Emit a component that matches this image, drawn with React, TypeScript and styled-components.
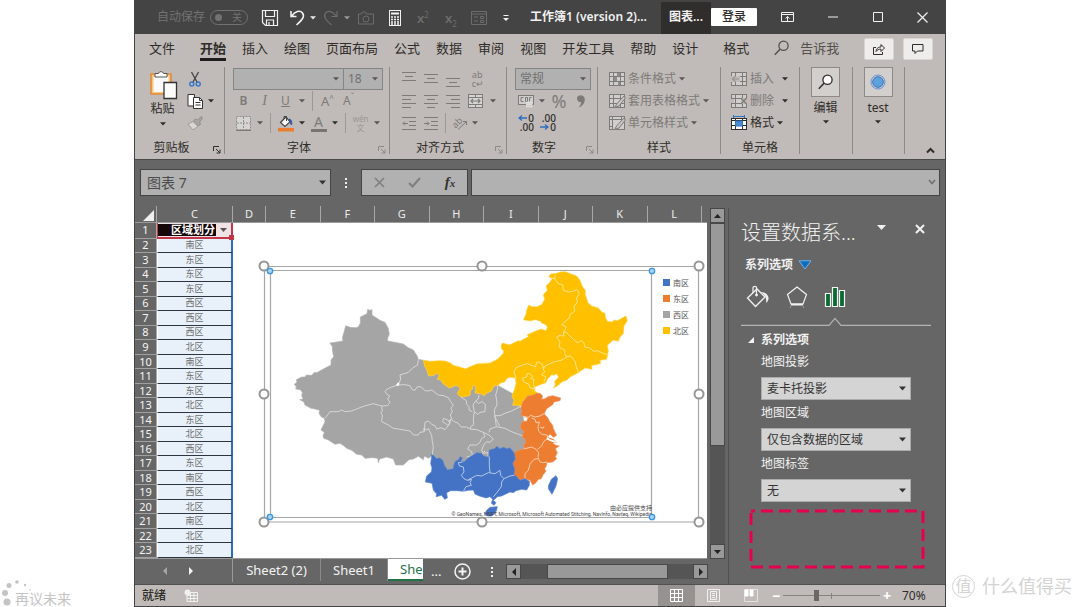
import React from "react";
import styled, { createGlobalStyle, css } from "styled-components";

const ink = "#2f2c2a";
const dim = "#7d7a78";
const ribbonBg = "#c0bbb8";
const paneBg = "#666666";

const GlobalStyle = createGlobalStyle`
  * { box-sizing: border-box; }
  body {
    margin: 0;
    background: #ffffff;
    color: ${ink};
    font: 12px/16px "Noto Sans", "Noto Sans CJK SC", sans-serif;
  }
  button, input, select { font: inherit; color: inherit; margin: 0; }
  button { padding: 0; border: 0; background: none; }
  svg { display: block; flex: none; }
  a { color: inherit; text-decoration: none; }
`;

/* ---------- page frame ---------- */

const Page = styled.div`
  display: grid;
  grid-template-columns: 134px minmax(0, 1fr) 134px;
  min-height: 100vh;
`;

const Margin = styled.aside<{ $pad?: number }>`
  display: flex;
  align-items: flex-end;
  padding-left: ${(p) => p.$pad ?? 0}px;
`;

const LeftMark = styled.div`
  display: flex;
  align-items: flex-end;
  color: #c4c4c4;
  font-size: 14px;
  line-height: 16px;
  white-space: nowrap;
`;

const RightMark = styled.div`
  display: flex;
  align-items: center;
  gap: 7px;
  padding-bottom: 9px;
  color: #d4d4d4;
  font-size: 18px;
  line-height: 24px;
  white-space: nowrap;
`;

const MarkDisc = styled.span`
  width: 23px;
  height: 23px;
  border-radius: 50%;
  border: 1px solid #d4d4d4;
  font-size: 16px;
  line-height: 21px;
  text-align: center;
`;

const Window = styled.main`
  display: flex;
  flex-direction: column;
  border-left: 1px solid #444444;
  border-right: 1px solid #444444;
  border-bottom: 1px solid #444444;
  background: ${paneBg};
`;

/* ---------- title bar ---------- */

const TitleBar = styled.header`
  display: flex;
  align-items: center;
  height: 34px;
  background: #444444;
  color: #f2f2f2;
`;

const AutoSave = styled.label`
  display: flex;
  align-items: center;
  gap: 5px;
  margin: 0 7px 0 22px;
  color: #727272;
  white-space: nowrap;
`;

const SwitchBox = styled.span`
  position: relative;
  display: flex;
  align-items: center;
  justify-content: flex-end;
  width: 38px;
  height: 15px;
  padding-right: 5px;
  border: 1px solid #727272;
  border-radius: 8px;
  font-size: 10px;
  line-height: 12px;
`;

const SwitchInput = styled.input`
  position: absolute;
  left: 4px;
  top: 3px;
  width: 7px;
  height: 7px;
  appearance: none;
  border-radius: 50%;
  background: #727272;
`;

const ToolButton = styled.button<{ $w: number; $off?: boolean }>`
  display: flex;
  flex: none;
  align-items: center;
  justify-content: center;
  width: ${(p) => p.$w}px;
  height: 22px;
  color: ${(p) => (p.$off ? dim : "inherit")};
`;

const QuickButton = styled(ToolButton)`
  height: 34px;
  padding-top: 2px;
  color: ${(p) => (p.$off ? "#6c6c6c" : "#f2f2f2")};
`;

const FileName = styled.h1`
  flex: 1;
  margin: 0 0 0 11px;
  font-size: 12px;
  line-height: 32px;
  font-weight: 600;
  white-space: nowrap;
`;

const ContextTab = styled.span`
  align-self: stretch;
  width: 50px;
  margin-top: 2px;
  background: #302e2c;
  font-weight: 600;
  line-height: 29px;
  text-align: center;
`;

const LoginButton = styled.button`
  width: 46px;
  height: 18px;
  margin: 0 8px 0 0;
  border-radius: 1px;
  background: #ffffff;
  color: ${ink};
  font-weight: 500;
  line-height: 18px;
`;

/* ---------- ribbon ---------- */

const TabRow = styled.nav`
  display: flex;
  align-items: flex-start;
  gap: 16px;
  height: 30px;
  padding-left: 14px;
  background: ${ribbonBg};
  font-size: 13px;
  white-space: nowrap;
`;

const Tab = styled.a<{ $active?: boolean; $apart?: boolean }>`
  margin-right: ${(p) => (p.$apart ? 9 : 0)}px;
  padding: 5px 0 1px;
  line-height: 18px;
  font-weight: ${(p) => (p.$active ? 700 : 400)};
  border-bottom: 3px solid ${(p) => (p.$active ? "#1f1d1c" : "transparent")};
`;

const TellMe = styled(Tab)`
  display: flex;
  align-items: center;
  gap: 11px;
  color: #55514e;
`;

const TabActions = styled.div`
  display: flex;
  gap: 9px;
  margin: 4px 12px 0 auto;
`;

const ActionButton = styled.button`
  display: grid;
  place-items: center;
  width: 30px;
  height: 22px;
  border: 1px solid #d8d5d3;
  border-radius: 2px;
  background: #efedec;
`;

const RibbonBody = styled.div`
  display: flex;
  height: 96px;
  padding: 3px 0 5px;
  border-bottom: 1px solid #4a4a4a;
  background: ${ribbonBg};
`;

const Group = styled.section<{ $w: number }>`
  position: relative;
  display: flex;
  flex: none;
  flex-direction: column;
  width: ${(p) => p.$w}px;
  border-right: 1px solid #8d8986;
`;

const GroupRow = styled.div<{ $pad?: number }>`
  display: flex;
  align-items: center;
  height: 22px;
  padding-left: ${(p) => p.$pad ?? 8}px;
  white-space: nowrap;

  &:first-child { height: 23px; }
`;

const GroupLabel = styled.h2<{ $full?: boolean }>`
  margin: auto ${(p) => (p.$full ? 0 : 16)}px 0 0;
  font-size: 12px;
  line-height: 12px;
  font-weight: 400;
  text-align: center;
`;

const Launcher = styled.button<{ $off?: boolean }>`
  position: absolute;
  right: 3px;
  bottom: 0;
  color: ${(p) => (p.$off ? "#8d8986" : ink)};
`;

const Split = styled.span<{ $gap?: number }>`
  width: 1px;
  height: 20px;
  margin: 0 ${(p) => p.$gap ?? 4}px;
  background: #9c9895;
`;

const ClipRow = styled.div`
  display: flex;
  flex: none;
  height: 68px;
`;

const BigButton = styled.button<{ $w: number; $gap?: number }>`
  display: flex;
  flex-direction: column;
  align-items: center;
  justify-content: flex-start;
  gap: ${(p) => p.$gap ?? 0}px;
  width: ${(p) => p.$w}px;
  padding-right: 2px;
  line-height: 16px;
`;

const CaretLine = styled.span`
  padding-top: 4px;
`;

const ClipSide = styled.div`
  display: flex;
  flex-direction: column;
  flex: 1;
  padding-top: 1px;
`;

const ClipTools = styled.div`
  display: flex;
`;

const BoxedIcon = styled.span`
  display: grid;
  place-items: center;
  width: 29px;
  height: 30px;
  margin-bottom: 3px;
  border: 1px solid #8d8986;
  background: #d2cfcd;
`;

const ListButton = styled.button<{ $off?: boolean }>`
  display: flex;
  align-items: center;
  gap: 3px;
  height: 22px;
  color: ${(p) => (p.$off ? dim : ink)};
`;

const Collapse = styled.button`
  align-self: flex-end;
  margin: 0 10px 0 auto;
`;

const WrapText = styled.span`
  font-size: 9px;
  line-height: 9px;
  text-align: left;
`;

const Combo = styled.span<{ $w: number; $h: number; $tone: "ribbon" | "pane" | "name"; $flush?: boolean }>`
  position: relative;
  display: block;
  flex: none;
  width: ${(p) => p.$w}px;
  height: ${(p) => p.$h}px;
  margin-left: ${(p) => (p.$flush ? -1 : 0)}px;
  color: ${(p) => (p.$tone === "ribbon" ? "#707070" : "#333333")};

  select {
    width: 100%;
    height: 100%;
    padding: 0 16px 0 4px;
    appearance: none;
    border: 1px solid #858585;
    border-radius: 0;
    background: #b1b1b1;
    outline: none;
    ${(p) => p.$tone === "pane" && css`background: #d4d4d4; border-color: #ababab; padding-left: 5px;`}
    ${(p) => p.$tone === "name" && css`border-color: #444444; padding-left: 6px; font-size: 14px; color: #4c4c4c;`}
  }
  svg { position: absolute; right: 5px; top: 0; height: 100%; pointer-events: none; }
`;

/* ---------- formula bar ---------- */

const FormulaBar = styled.div`
  display: flex;
  align-items: center;
  height: 46px;
  padding: 0 5px 1px;
  color: #e8e8e8;
`;

const FormulaButtons = styled.div`
  display: flex;
  align-items: center;
  justify-content: space-around;
  width: 107px;
  height: 27px;
  border: 1px solid #444444;
  background: #b1b1b1;
  color: #808080;
`;

const FormulaField = styled.label`
  position: relative;
  flex: 1;
  height: 27px;
  margin-left: 3px;
  color: #707070;

  input {
    width: 100%;
    height: 100%;
    border: 1px solid #444444;
    border-radius: 0;
    background: #b1b1b1;
  }
  svg { position: absolute; right: 4px; top: 10px; }
`;

const FxButton = styled.button`
  color: #333333;
  font: italic 700 15px/20px "Liberation Serif", serif;
  small { font-size: 11px; }
`;

const Dots = styled.span<{ $m: number }>`
  width: 2px;
  height: 10px;
  margin: 0 ${(p) => p.$m}px;
  background: repeating-linear-gradient(#f0f0f0 0 2px, transparent 2px 4px);
`;

/* ---------- worksheet ---------- */

const Workspace = styled.div`
  display: flex;
  flex: 1;
  border-bottom: 1px solid #505050;
`;

const SheetColumn = styled.div`
  display: flex;
  flex: 1;
  flex-direction: column;
  min-width: 0;
`;

const SheetBody = styled.div`
  display: flex;
  gap: 3px;
  padding-right: 3px;
`;

const Canvas = styled.div`
  position: relative;
  flex: 1;
  min-width: 0;
`;

const Grid = styled.table`
  width: 100%;
  height: 353px;
  table-layout: fixed;
  border-collapse: separate;
  border-spacing: 0;
  border-bottom: 1px solid #9a9a9a;
  font-size: 11px;
  line-height: 12px;

  th { padding: 0; font-weight: 400; }
  td { padding: 0; }
  thead th {
    height: 17px;
    border-right: 1px solid #a8a8a8;
    border-bottom: 1px solid #9a9a9a;
    color: #ececec;
  }
  thead th:last-child { border-right: 0; }
  tbody th {
    border-right: 1px solid #a8a8a8;
    border-bottom: 1px solid #a0a0a0;
    color: #f4f4f4;
  }
`;

const Corner = styled.svg`
  margin: 2px 0 0 8px;
`;

const Region = styled.td`
  border-left: 1px solid #ffffff;
  border-right: 2px solid #2f6bc4;
  border-bottom: 1px solid #2c3440;
  background: #e8f0fa;
  color: #6c6c6c;
  font-size: 9px;
  text-align: center;
`;

const HeadCell = styled.td`
  position: relative;
  border: 1px solid #c4364a;
  border-width: 0 2px 2px 1px;
  background: #f1e2e5;

  &::after {
    content: "";
    position: absolute;
    right: -3px;
    bottom: -3px;
    width: 5px;
    height: 5px;
    background: #c4364a;
  }
`;

const HeadInner = styled.div`
  display: flex;
  align-items: center;
  justify-content: space-between;
  color: #555555;

  span {
    flex: 1;
    margin-right: 4px;
    padding-right: 1px;
    background: #150607;
    color: #ffffff;
    font-size: 11px;
    line-height: 12px;
    font-weight: 600;
    text-align: right;
  }
  svg { margin-right: 4px; }
`;

const Blank = styled.td`
  background: #ffffff;
`;

const ChartFrame = styled.figure`
  position: absolute;
  left: 123px;
  top: 54px;
  margin: 0;
`;

const ScrollTrack = styled.div`
  display: flex;
  flex-direction: column;
  width: 15px;
  margin-top: 2px;
  background: #555555;
`;

const ScrollButton = styled.button`
  display: grid;
  place-items: center;
  flex: none;
  width: 15px;
  height: 15px;
  border: 1px solid #484848;
  background: #999999;
  color: #222222;
`;

const ScrollThumb = styled.div`
  height: 223px;
  margin-bottom: auto;
  border: 1px solid #484848;
  background: #999999;
`;

const SheetBar = styled.div`
  display: flex;
  align-items: flex-start;
  flex: 1;
  min-height: 24px;
  color: #f4f4f4;
  font-size: 13px;
  line-height: 21px;
  white-space: nowrap;
`;

const SheetNav = styled.div`
  display: flex;
  align-items: center;
  justify-content: center;
  gap: 22px;
  width: 98px;
  height: 23px;
  padding-right: 12px;
  border-right: 1px solid #999999;
`;

const NavButton = styled.button<{ $off?: boolean }>`
  color: ${(p) => (p.$off ? "#a6a6a6" : "#f4f4f4")};
`;

const SheetTab = styled.button<{ $w: number; $active?: boolean }>`
  width: ${(p) => p.$w}px;
  height: 22px;
  border-right: 1px solid #8a8a8a;
  ${(p) =>
    p.$active &&
    css`
      padding-left: 12px;
      border-right: 0;
      border-bottom: 2px solid #217346;
      background: #ffffff;
      color: #217346;
      text-align: left;
    `}
`;

const SheetTools = styled.div`
  display: flex;
  align-items: center;
  height: 25px;
  margin-left: 8px;
`;

const NewSheet = styled.button`
  margin: 0 20px 0 13px;
`;

const HScroll = styled.div`
  display: flex;
  width: 202px;
  margin: 5px 20px 0 auto;
  background: #555555;
`;

const HThumb = styled.div`
  width: 121px;
  margin: 0 auto 0 26px;
  border: 1px solid #484848;
  background: #999999;
`;

/* ---------- format pane ---------- */

const Pane = styled.aside`
  width: 217px;
  margin-top: 2px;
  padding: 11px 13px 0 12px;
  border-left: 1px solid #505050;
  color: #f2f2f2;
`;

const PaneHead = styled.div`
  display: flex;
  align-items: flex-start;
  height: 38px;
  margin-right: -13px;
`;

const PaneTitle = styled.h2`
  flex: 1;
  margin: 0;
  font-size: 20px;
  line-height: 28px;
  font-weight: 300;
  white-space: nowrap;
`;

const PaneButton = styled.button<{ $w: number }>`
  display: flex;
  justify-content: center;
  width: ${(p) => p.$w}px;
  padding-top: 5px;
`;

const Chooser = styled.button`
  display: flex;
  align-items: center;
  gap: 5px;
  margin-left: 4px;
  font-weight: 700;
  line-height: 16px;
`;

const PaneTabs = styled.div`
  display: flex;
  gap: 16px;
  margin: 12px 0 8px 5px;
`;

const Section = styled.section`
  display: flex;
  flex-direction: column;
  padding: 6px 0 0 20px;
`;

const SectionTitle = styled.h3`
  display: flex;
  align-items: center;
  gap: 6px;
  margin: 0 0 6px -14px;
  font-size: 12px;
  line-height: 16px;
  font-weight: 700;
`;

const Field = styled.label`
  display: flex;
  flex-direction: column;
  gap: 7px;
  margin-bottom: 5px;
  line-height: 16px;
`;

const Marker = styled.svg`
  margin: 2px 0 0 8px;
`;

/* ---------- status bar ---------- */

const StatusBar = styled.footer`
  display: flex;
  align-items: center;
  height: 21px;
  padding-left: 7px;
  background: ${ribbonBg};
  color: ${ink};
`;

const Ready = styled.span`
  margin-right: 18px;
  font-weight: 500;
`;

const ViewButtons = styled.div`
  display: flex;
  align-self: stretch;
  margin-left: auto;
`;

const ViewButton = styled.button<{ $on?: boolean }>`
  display: grid;
  place-items: center;
  width: 37px;
  background: ${(p) => (p.$on ? "#969290" : "transparent")};
`;

const ZoomButton = styled.button`
  width: 14px;
  color: #ffffff;
  font-size: 14px;
  font-weight: 700;
  line-height: 18px;
`;

const ZoomRange = styled.input`
  width: 97px;
  height: 12px;
  appearance: none;
  background:
    linear-gradient(#858280, #858280) 50% 50% / 1px 6px no-repeat,
    linear-gradient(#858280, #858280) 0 50% / 100% 1px no-repeat;

  &::-webkit-slider-thumb {
    appearance: none;
    width: 5px;
    height: 11px;
    background: #6a6765;
  }
`;

const ZoomValue = styled.span`
  width: 43px;
  margin-left: 8px;
`;

/* ---------- icons ---------- */

type Kids = { children: React.ReactNode; w?: number; h?: number };

const Icon = ({ children, w = 16, h = 16 }: Kids) => (
  <svg
    width={w}
    height={h}
    viewBox={`0 0 ${w} ${h}`}
    fill="none"
    stroke="currentColor"
    strokeWidth="1"
    overflow="visible"
    aria-hidden="true"
  >
    {children}
  </svg>
);

const Caret = ({ color = "#5a5654" }: { color?: string }) => (
  <svg width="6" height="4" viewBox="0 0 6 4" aria-hidden="true">
    <path d="M0 .3h6L3 3.6z" fill={color} />
  </svg>
);

const Arrow = ({ d, w = 7, h = 8 }: { d: string; w?: number; h?: number }) => (
  <svg width={w} height={h} viewBox={`0 0 ${w} ${h}`} aria-hidden="true">
    <path d={d} fill="currentColor" />
  </svg>
);

const ChevDown = () => (
  <Icon w={8} h={6}>
    <path d="M1 1l3 3.5L7 1" strokeWidth="1.6" />
  </Icon>
);

const Lines = ({ rows }: { rows: number[][] }) => (
  <Icon w={14} h={16}>
    {rows.map(([x1, x2, y]) => (
      <path key={y} d={`M${x1} ${y}.5H${x2}`} />
    ))}
  </Icon>
);

const CellsIcon = ({ kind }: { kind: "cond" | "table" | "style" | "insert" | "delete" | "format" }) => {
  const on = kind === "format";
  return (
    <Icon w={16} h={16}>
      <rect x=".5" y="1.5" width="15" height="13" fill={on ? "#fff" : "#d0cecc"} />
      {kind === "style" ? (
        <path d="M.5 4.5h15M3.5 1.5v13M12.500 1.500v3M.5 11.500h3" />
      ) : (
        <path d="M.5 5.5h15M.5 10.5h15M4.5 1.5v13M11.5 1.5v13" />
      )}
      {kind === "cond" && <path d="M5 6h3v4H5zM8 2h3v3H8zM9 11h2v3H9z" fill="#8f8c8a" stroke="none" />}
      {(kind === "table" || kind === "style") && (
        <path d="M15.500 2.500L8 10.500 5.500 14.500l4.500-1.500 6-7.500z" fill="#c8c5c3" />
      )}
      {kind === "insert" && (
        <>
          <path d="M0 5h9v6H0z" fill={ribbonBg} stroke="none" />
          <path d="M8 8H1.500M4.500 5L1.500 8l3 3" stroke="#98948f" strokeWidth="1.200" />
        </>
      )}
      {kind === "delete" && (
        <>
          <path d="M0 6h3v4H0zM10 5h6v6h-6z" fill={ribbonBg} stroke="none" />
          <path d="M10 5l5.500 6M15.500 5L10 11" strokeWidth="1.300" />
        </>
      )}
      {on && (
        <>
          <path d="M0 0h16v3H0z" fill={ribbonBg} stroke="none" />
          <path d="M2.5 0v3M13.5 0v3M3 1.5h10" stroke="#2f73c4" />
          <path d="M0 3.500h16" />
          <rect x="4.500" y="6" width="7" height="5" fill="#4a8ed0" stroke="#2f73c4" />
        </>
      )}
    </Icon>
  );
};

const Magnifier = ({ fill = "none" }: { fill?: string }) => (
  <Icon w={15} h={16}>
    <circle cx="9.5" cy="5.8" r="4.6" fill={fill} strokeWidth="1.3" />
    <path d="M6 9.3L.8 14.8" strokeWidth="1.5" />
  </Icon>
);

const PasteIcon = () => (
  <Icon w={28} h={33}>
    <path d="M2 7h20v20H2z" fill="#f4c87e" stroke="#e08a3a" strokeWidth="1.600" />
    <path d="M4.500 9.500h15V25h-15z" fill="#fafafa" stroke="none" />
    <path d="M6 10V6.500h3.500a2.600 2.600 0 015 0H18V10z" fill="#fff" stroke="#555" />
    <path d="M15 15.500h12.500v16H15z" fill="#fbfbfb" stroke="#333" strokeWidth="1.300" />
  </Icon>
);

const CutIcon = () => (
  <Icon w={12} h={16}>
    <path d="M2.500 1l6 11M9.500 1l-6 11" stroke="#444" strokeWidth="1.3" />
    <circle cx="2.800" cy="13" r="2" stroke="#3a78c8" strokeWidth="1.500" />
    <circle cx="9.200" cy="13" r="2" stroke="#3a78c8" strokeWidth="1.500" />
  </Icon>
);

const CopyIcon = () => (
  <Icon w={17} h={16}>
    <path d="M1 1.500h6.500V13H1z" fill="#fff" stroke="#333" />
    <path d="M6.500 4.500h6l3 3v8h-9z" fill="#fff" stroke="#333" />
    <path d="M12.500 4.500v3h3M8.500 9.500h5M8.500 12h5" stroke="#333" />
  </Icon>
);

const BrushIcon = () => (
  <Icon w={16} h={16}>
    <path d="M14.500 1.500l-4 3.500-2-1-2 2 5 5 2-2-1-2 3-4z" fill="#aaa6a3" stroke="#8f8c8a" />
    <path d="M6 6.500L1 9l5 6 5-3.500z" fill="#d8d5d3" stroke="#a09c99" />
  </Icon>
);

const BordersIcon = () => (
  <Icon w={15} h={15}>
    <rect x=".5" y=".5" width="14" height="13" fill="#d6d4d3" stroke="#8f8c8a" strokeDasharray="2 1" />
    <path d="M7.500 1v13M1 7h13" stroke="#8f8c8a" strokeDasharray="2 1" />
    <path d="M0 14.500h15" />
  </Icon>
);

const FillIcon = () => (
  <Icon w={16} h={17}>
    <path d="M2.500 7.500L8 2l4 5-5 4.500z" fill="#fff" stroke="#444" strokeWidth="1.200" />
    <path d="M6 4V1.500h2.500V6" stroke="#444" />
    <path d="M11 4c3 .5 3 4 2.500 6-1-1-1-4-2.500-6z" fill="#2f55a4" stroke="#2f55a4" />
    <path d="M0 13h16v3.500H0z" fill="#ed7d31" stroke="none" />
  </Icon>
);

const MergeIcon = () => (
  <Icon w={16} h={16}>
    <rect x=".5" y="1.500" width="14" height="13" fill="#d6d4d3" />
    <path d="M.5 4.500h14M.5 11.500h14M7.500 1.500v3M7.500 11.500v3" />
    <path d="M3 8h9M5 6L3 8l2 2M10 6l2 2-2 2" strokeWidth="1.200" />
  </Icon>
);

const IndentIcon = ({ dir }: { dir: "in" | "out" }) => (
  <Icon w={14} h={16}>
    <path d="M0 2.500h14M7 6.500h7M7 10.500h7M0 14.500h14" />
    <path d={dir === "out" ? "M6 8.500H1M3 6.500l-2 2 2 2" : "M0 8.500h5M3 6.500l2 2-2 2"} />
  </Icon>
);

const CurrencyIcon = () => (
  <Icon w={16} h={14}>
    <rect x=".5" y="1.500" width="15" height="9" fill="#d0cecc" />
    <path d="M5.500 3.500H3v4h2.500M7.500 3.500h2v4h-2zM13.500 3.500h-2v4" />
    <path d="M8 8.500h6.500M8 10.500h6.500M8 12.500h6.500" stroke="#e0dedc" strokeWidth="1.500" />
  </Icon>
);

const DecimalWrap = styled.span`
  position: relative;
  display: block;
  width: 16px;
  color: ${ink};
  font-size: 10px;
  font-weight: 500;
  line-height: 9px;
  text-align: right;
  svg { position: absolute; left: 0; }
`;

const Decimal = ({ more }: { more?: boolean }) => (
  <DecimalWrap>
    {more ? ".00" : "0"}
    <br />
    {more ? "0" : ".00"}
    <svg
      width="9"
      height="6"
      viewBox="0 0 9 6"
      style={{ top: more ? 10 : 1 }}
      fill="none"
      stroke="#2f6fc0"
      strokeWidth="1.3"
    >
      <path d={more ? "M0 3h8M5 .5L8 3 5 5.500" : "M9 3H1M4 .5L1 3l3 2.500"} />
    </svg>
  </DecimalWrap>
);

const Glyph = styled.span<{ $size: number; $serif?: boolean }>`
  font-family: ${(p) => (p.$serif ? '"Liberation Serif", serif' : "inherit")};
  font-size: ${(p) => p.$size}px;
  line-height: ${(p) => p.$size + 2}px;

  sup, sub { font-size: 8px; line-height: 0; }
  b { font-weight: 600; }
`;

const FontColor = styled.span`
  width: 16px;
  border-bottom: 3px solid #777472;
  font-size: 14px;
  line-height: 14px;
`;

const Pinyin = styled.span`
  font-size: 8px;
  line-height: 9px;
  color: #9a9693;
`;

/* ---------- map chart ---------- */

const north = "#ffc000";
const east = "#ed7d31";
const south = "#4472c4";
const west = "#a5a5a5";

const legend = [
  { name: "南区", color: south },
  { name: "东区", color: east },
  { name: "西区", color: west },
  { name: "北区", color: north },
];

const handles = [
  [264, 266], [482, 266], [699, 266], [264, 394], [699, 394], [264, 522], [482, 522], [699, 522],
];
const plotHandles = [[270, 271], [652, 271], [270, 517], [652, 517]];

const MapChart = () => (
  <svg width="449" height="268" viewBox="258 260 449 268" role="img" aria-label="区域划分">
    <g fill="none" stroke="#a6a6a6">
      <path d="M264.500 266.500h434v255.500h-434z" strokeWidth="1.200" />
      <path d="M270.500 270.500h381v247h-381z" strokeWidth="1.200" />
    </g>
    <g transform="translate(285 295) scale(.33333)" strokeLinejoin="round" strokeWidth="3">
      <path
        fill={west}
        stroke="#b4b4b4"
        strokeWidth="2"
        d="M415 196L400 193 396 182 385 165 370 158 355 147 330 142 308 138 308 128 313 118 310 100 300 82 285 76 270 66 261 60 261 44 254 46 248 43 246 56 226 66 226 84 220 96 212 98 196 97 182 92 178 108 175 118 172 128 174 138 155 141 135 144 142 155 142 165 146 185 138 195 138 210 115 222 95 233 88 232 80 241 64 240 60 246 50 246 34 254 36 262 28 268 34 276 32 282 46 284 52 292 50 302 54 312 44 314 56 320 60 330 78 340 90 342 104 346 102 354 108 365 118 370 120 380 108 405 118 412 114 422 116 430 130 435 150 448 165 445 176 452 185 460 200 466 215 478 230 480 240 490 262 488 278 490 280 503 284 492 305 486 325 492 332 510 355 510 372 494 385 492 400 484 415 494 418 484 432 490 440 480 455 500 500 535 560 520 640 500 700 480 725 450 722 410 712 350 705 335 690 300 600 250 500 240 450 225z"
      />
      <path
        fill="none"
        stroke="#d6d6d6"
        d="M400 193L398 210 384 218 370 232 345 240 347 252 340 270M340 270L320 276 304 284 300 290 308 300 314 302 308 312 315 322 308 332 290 333 265 326 235 334 215 342 200 348 180 350 170 345 160 350 135 350 120 370M290 333L292 348 288 352 292 362 290 380 310 390 325 400 340 402 362 406 375 408 385 420 400 420 405 412 418 410 416 400 426 405 430 400 440 422 442 440 445 455 442 480M340 270L360 269 375 272 382 284 390 286 396 276 408 275 420 287 430 288 440 285 460 300 476 302 490 308 497 320 505 330 498 340 502 350 496 360 500 370 490 380M418 410L420 382 430 378 440 388 450 392 455 402 468 398 480 404 490 392 482 386 472 380 476 370 490 376 496 382 490 392M490 392L498 372 508 380 520 385 528 396 545 396 555 402 575 404 595 412M555 402L558 394 566 390 565 372 568 350 564 330 572 318 580 325 592 320 601 328 600 350 585 352 578 358 568 350M528 306L545 318 544 326 552 335 552 345 562 350M572 318L580 312 582 300M595 412L600 425 590 430 585 442 575 450 555 450 548 462 560 470 562 482 545 486M595 412L612 420 625 432 615 442 605 440 596 450 590 465 596 475 608 472 610 486M637 267L638 280 632 300 635 315 636 330 628 345 630 366 644 394M630 362L645 362 660 355 680 348 705 335M630 362L634 395 615 402 612 412M634 395L660 400 675 408 700 418 717 424M562 480L575 475 590 478 600 468"
      />
      <path fill="#fff" stroke="none" d="M337 264l4-2 2 6-3 5-7-2z" />
    </g>
    <g transform="translate(410 262) scale(.33333)" strokeLinejoin="round" strokeWidth="2">
      <path
        fill={north}
        stroke="#ffd34d"
        d="M40 294L60 298 90 296 105 297 120 302 130 310 145 314 168 320 180 314 200 306 240 303 262 292 270 284 280 274 281 266 275 262 273 252 277 243 290 247 300 248 312 242 325 236 330 238 340 232 355 224 352 218 375 208 393 201 408 206 412 196 408 188 396 184 392 178 375 173 360 177 340 173 347 160 350 145 356 129 366 134 380 134 395 128 404 112 400 98 412 85 408 72 418 62 427 50 416 44 422 36 440 34 450 30 466 29 478 34 500 42 510 55 518 75 526 85 526 97 534 122 545 132 565 138 575 150 585 154 586 166 592 178 605 180 614 174 622 176 640 166 648 162 652 176 642 192 640 215 630 225 625 238 610 234 592 250 595 268 590 292 570 295 572 304 560 308 545 310 546 322 525 318 505 332 480 345 470 355 455 360 445 370 430 378 436 368 434 358 446 345 440 336 430 340 425 338 412 352 408 362 390 368 375 375 374 388 386 394 372 400 352 402 345 412 338 420 336 433 320 430 308 430 312 415 306 405 308 395 314 382 315 376 318 365 316 348 300 346 290 350 284 360 270 364 265 370 252 372 244 388 232 392 222 401 214 396 195 393 197 378 193 370 187 373 188 382 182 384 180 400 165 404 150 404 142 394 150 380 146 374 138 370 130 374 118 378 100 366 92 354 82 352 88 340 80 334 72 340 56 342 52 328 44 312z"
      />
      <path
        fill="none"
        stroke="#ffe48f"
        strokeWidth="3"
        d="M424 48L434 50 436 38M434 50L445 65 458 68 460 84 475 90 490 88 500 82 508 95 500 108 502 122 492 132 494 148 480 158 478 168 455 188 468 194 466 202 460 212M460 212L468 210 480 222 490 232 502 242 515 236 522 242 525 255 540 258 550 268 560 266 575 272 592 278M460 212L462 222 450 220 440 225 450 240 447 255 465 265 464 275 470 285M470 285L482 282 490 292 496 300 498 310 505 332M470 285L460 292 450 296 430 300 405 312 400 322M400 322L398 308 386 300 380 302 376 315 370 312 350 305 330 312 318 318 312 330 318 348M400 322L404 330 394 338 408 345 402 360M340 358L338 348 350 345 350 336 358 334 368 342 362 350 372 352 370 360 372 372 374 380 360 378 356 366 345 362 340 358"
      />
      <path
        fill={east}
        stroke="#f0935a"
        d="M338 420L345 412 352 402 372 398 380 394 390 394 398 402 395 412 405 410 414 404 428 401 452 408 450 416 432 420 428 428 410 440 402 456 412 465 420 480 428 490 430 500 440 520 430 526 420 516 412 526 430 532 440 540 428 544 438 550 448 552 436 560 442 572 436 584 440 590 428 600 410 602 410 610 404 620 408 628 398 640 394 650 385 652 378 662 368 669 360 655 345 650 330 655 318 642 312 640 314 620 308 605 316 590 312 572 325 565 345 560 340 548 348 542 345 530 336 525 342 508 332 500 332 490 338 478 350 478 354 468 332 458 336 448 332 440z"
      />
      <path
        fill="none"
        stroke="#f8cbad"
        strokeWidth="3"
        d="M340 464L355 466 362 460 375 465 390 462 402 455M365 468L375 472 378 482 388 480 384 495 386 508 395 516 412 520 412 530 400 540 395 552 382 562M345 560L365 555 378 562 386 572 384 586 390 600M390 600L400 602 412 600M384 590L372 592 360 606 355 625 345 635 345 650M390 495l10 4 2-6"
      />
      <path fill="#fff" stroke="none" d="M412 526l8 6 22 6-8 4-16-6-8-4z" />
      <path
        fill={south}
        stroke="#5b84cc"
        d="M64 577L72 582 80 590 88 588 98 594 103 610 112 624 130 620 132 608 136 598 145 594 150 584 158 588 152 596 162 600 175 588 190 578 200 572 215 574 220 582 236 586 238 564 254 560 260 553 270 560 280 556 290 560 300 558 312 572 316 590 308 605 314 620 312 640 318 642 330 655 345 650 358 658 358 670 350 684 335 682 318 686 310 692 300 690 275 702 262 704 250 715 258 722 252 730 244 724 248 712 240 704 228 708 208 702 195 696 190 684 175 685 160 688 140 686 122 686 110 692 112 708 104 712 95 700 78 704 80 696 70 684 66 664 46 660 50 642 64 630 66 618 62 605 64 590zM230 745L240 736 262 734 260 744 254 756 244 762 232 762 225 754zM438 641L443 650 438 672 426 697 416 682 415 672 424 652z"
      />
      <path
        fill="none"
        stroke="#b4c7e7"
        strokeWidth="3"
        d="M158 600L145 602 148 612 160 615 162 630 154 640 162 650 172 655 185 652 180 662 184 670 168 674 160 688M172 655L185 648 200 640 215 642 235 632 255 635 270 625M238 584L238 610 240 632M270 625L272 640 282 650 300 642 312 640M282 650L275 660 274 674 262 690 250 705"
      />
    </g>
    {legend.map((item, i) => (
      <g key={item.name} transform={`translate(663 ${279 + i * 16})`}>
        <rect width="7" height="7" fill={item.color} />
        <text x="10" y="7" fontSize="8" fill="#555">{item.name}</text>
      </g>
    ))}
    <g fill="#444" textAnchor="end">
      <text x="652" y="510" fontSize="6">由必应提供支持</text>
      <text x="652" y="516" fontSize="5" fontFamily="Roboto, sans-serif">
        © GeoNames, MSFT, Microsoft, Microsoft Automated Stitching, NavInfo, Navteq, Wikipedia
      </text>
    </g>
    <g fill="#fff" stroke="#969696" strokeWidth="2">
      {handles.map(([x, y]) => (
        <circle key={`${x}-${y}`} cx={x} cy={y} r="4.500" />
      ))}
    </g>
    <g fill="#a9d3f2" stroke="#3a96dd" strokeWidth="1.300">
      {plotHandles.map(([x, y]) => (
        <circle key={`${x}-${y}`} cx={x} cy={y} r="2.700" />
      ))}
    </g>
  </svg>
);

/* ---------- data ---------- */

const tabs: { name: string; active?: boolean; apart?: boolean }[] = [
  { name: "文件", apart: true },
  { name: "开始", active: true },
  { name: "插入" },
  { name: "绘图" },
  { name: "页面布局" },
  { name: "公式" },
  { name: "数据" },
  { name: "审阅" },
  { name: "视图" },
  { name: "开发工具" },
  { name: "帮助" },
  { name: "设计", apart: true },
  { name: "格式", apart: true },
];

const columns = ["D", "E", "F", "G", "H", "I", "J", "K", "L"];
const regions = "南东东东西西西北南东东北东北西东南西北南北北".split("").map((c) => c + "区");

const fields = [
  { label: "地图投影", value: "麦卡托投影" },
  { label: "地图区域", value: "仅包含数据的区域" },
  { label: "地图标签", value: "无" },
];

const Start = () => (
  <TitleBar>
    <AutoSave>
      自动保存
      <SwitchBox>
        <SwitchInput type="checkbox" role="switch" />关
      </SwitchBox>
    </AutoSave>
    <QuickButton $w={30} aria-label="保存">
      <Icon w={16} h={16}>
        <path d="M.5.5h15v15H3.500l-3-3zM3.500.5v6h9v-6M4.500 15v-5h7v5M7 12v3" strokeWidth="1.200" />
      </Icon>
    </QuickButton>
    <QuickButton $w={24} aria-label="撤消">
      <Icon w={15} h={16}>
        <path d="M1 1v5.500h5.500M1.500 6.500C5 1 10 0 12.500 3c2.500 3.500 0 6.500-6 12" strokeWidth="1.600" />
      </Icon>
    </QuickButton>
    <QuickButton $w={8} aria-label="撤消选项"><Caret color="#e8e8e8" /></QuickButton>
    <QuickButton $w={26} $off aria-label="恢复">
      <Icon w={15} h={16}>
        <path d="M14 1v5.500H8.500M13.500 6.500C10 1 5 0 2.500 3 0 6.500 2.500 9.500 8.500 15" strokeWidth="1.200" />
      </Icon>
    </QuickButton>
    <QuickButton $w={8} $off aria-label="恢复选项"><Caret color="#999" /></QuickButton>
    <QuickButton $w={30} $off aria-label="照相机">
      <Icon w={16} h={14}>
        <path d="M.5 3h3l1-2h3l1 2h7v10H.5z" />
        <circle cx="8" cy="8" r="3" />
      </Icon>
    </QuickButton>
    <QuickButton $w={28} aria-label="计算器">
      <Icon w={12} h={16}>
        <rect x=".5" y=".5" width="11" height="15" />
        <path d="M2 3.500h8" strokeWidth="2" />
        <path d="M2 7h8M2 9.500h8M2 12h8M2 14h8" strokeWidth="1.500" strokeDasharray="2 1" />
      </Icon>
    </QuickButton>
    <QuickButton $w={28} $off aria-label="上标"><Glyph $size={13}><b>x</b><sup>2</sup></Glyph></QuickButton>
    <QuickButton $w={28} $off aria-label="下标"><Glyph $size={13}><b>x</b><sub>2</sub></Glyph></QuickButton>
    <QuickButton $w={28} $off aria-label="记录单">
      <Icon w={16} h={14}>
        <path d="M.5.5h15v13H.5zM.5 3h15M3 6h4M3 10h4M9.500 5.500h3v2h-3zM9.500 9.500h3v2h-3z" />
      </Icon>
    </QuickButton>
    <QuickButton $w={26} aria-label="自定义快速访问工具栏">
      <Icon w={6} h={8}>
        <path d="M.5 1.500h5" />
        <path d="M0 4h6L3 7z" fill="currentColor" stroke="none" />
      </Icon>
    </QuickButton>
    <FileName>工作簿1 (version 2)...</FileName>
    <ContextTab>图表...</ContextTab>
    <LoginButton>登录</LoginButton>
    <ToolButton $w={45} aria-label="功能区显示选项">
      <Icon w={13} h={10}>
        <path d="M.5.5h12v9H.5zM.5 2.500h12M6.500 9V4.500M4.500 6.500l2-2 2 2" />
      </Icon>
    </ToolButton>
    <ToolButton $w={45} aria-label="最小化"><Icon w={10} h={2}><path d="M0 1h10" /></Icon></ToolButton>
    <ToolButton $w={45} aria-label="最大化"><Icon w={10} h={10}><path d="M.5.5h9v9h-9z" /></Icon></ToolButton>
    <ToolButton $w={45} aria-label="关闭">
      <Icon w={11} h={11}><path d="M.5.5l10 10M10.500.5l-10 10" strokeWidth="1.200" /></Icon>
    </ToolButton>
  </TitleBar>
);

const LauncherIcon = () => (
  <Icon w={8} h={8}>
    <path d="M.5 5V.5H6M3 3l4 4M7 3.500V7H3.500" />
  </Icon>
);

const Ribbon = () => (
  <>
    <TabRow>
      {tabs.map((t) => (
        <Tab key={t.name} href="#" $active={t.active} $apart={t.apart}>{t.name}</Tab>
      ))}
      <TellMe href="#"><Magnifier />告诉我</TellMe>
      <TabActions>
        <ActionButton aria-label="共享">
          <Icon w={12} h={12}>
            <path d="M3 4.500H.5v7h9V9M3 8.500C3.500 5 5.500 4 8 4V1.500l3.500 3.500L8 8.500V6.200C6 6 4.500 6.500 3 8.500z" />
          </Icon>
        </ActionButton>
        <ActionButton aria-label="批注">
          <Icon w={12} h={11}>
            <path d="M.5.5h10.500v6.500H5.500L3 9.500V7H.5z" />
          </Icon>
        </ActionButton>
      </TabActions>
    </TabRow>
    <RibbonBody>
      <Group $w={90}>
        <ClipRow>
          <BigButton $w={57} $gap={1} aria-label="粘贴">
            <PasteIcon />
            粘贴
            <CaretLine><Caret color={ink} /></CaretLine>
          </BigButton>
          <ClipSide>
            <ToolButton $w={6} aria-label="剪切"><CutIcon /></ToolButton>
            <ClipTools>
              <ToolButton $w={6} aria-label="复制"><CopyIcon /></ToolButton>
              <ToolButton $w={26} aria-label="复制选项"><Caret color={ink} /></ToolButton>
            </ClipTools>
            <ToolButton $w={6} aria-label="格式刷"><BrushIcon /></ToolButton>
          </ClipSide>
        </ClipRow>
        <GroupLabel>剪贴板</GroupLabel>
        <Launcher aria-label="剪贴板选项"><LauncherIcon /></Launcher>
      </Group>

      <Group $w={165}>
        <GroupRow>
          <Combo $w={111} $h={22} $tone="ribbon">
            <select aria-label="字体"><option></option></select><Caret />
          </Combo>
          <Combo $w={40} $h={22} $tone="ribbon" $flush>
            <select aria-label="字号"><option>18</option></select><Caret />
          </Combo>
        </GroupRow>
        <GroupRow>
          <ToolButton $w={21} $off aria-label="加粗"><Glyph $size={12}><b>B</b></Glyph></ToolButton>
          <ToolButton $w={21} $off aria-label="倾斜"><Glyph $size={14} $serif><i>I</i></Glyph></ToolButton>
          <ToolButton $w={21} $off aria-label="下划线"><Glyph $size={12}><u>U</u></Glyph></ToolButton>
          <ToolButton $w={12} aria-label="下划线选项"><Caret /></ToolButton>
          <Split />
          <ToolButton $w={21} $off aria-label="增大字号"><Glyph $size={13}>A<sup>^</sup></Glyph></ToolButton>
          <ToolButton $w={21} $off aria-label="减小字号"><Glyph $size={12}>A<sup>ˇ</sup></Glyph></ToolButton>
        </GroupRow>
        <GroupRow>
          <ToolButton $w={21} $off aria-label="边框"><BordersIcon /></ToolButton>
          <ToolButton $w={12} aria-label="边框选项"><Caret /></ToolButton>
          <Split />
          <ToolButton $w={21} aria-label="填充颜色"><FillIcon /></ToolButton>
          <ToolButton $w={12} aria-label="填充颜色选项"><Caret color={ink} /></ToolButton>
          <ToolButton $w={21} $off aria-label="字体颜色"><FontColor>A</FontColor></ToolButton>
          <ToolButton $w={12} aria-label="字体颜色选项"><Caret color={ink} /></ToolButton>
          <Split />
          <ToolButton $w={21} $off aria-label="拼音"><Pinyin>wén<br />文</Pinyin></ToolButton>
          <ToolButton $w={12} aria-label="拼音选项"><Caret /></ToolButton>
        </GroupRow>
        <GroupLabel>字体</GroupLabel>
        <Launcher $off aria-label="字体选项"><LauncherIcon /></Launcher>
      </Group>

      <Group $w={117}>
        <GroupRow>
          <ToolButton $w={22} $off aria-label="顶端对齐"><Lines rows={[[0, 14, 1], [3, 11, 5], [0, 14, 9]]} /></ToolButton>
          <ToolButton $w={22} $off aria-label="垂直居中"><Lines rows={[[0, 14, 3], [3, 11, 7], [0, 14, 11]]} /></ToolButton>
          <ToolButton $w={22} $off aria-label="底端对齐"><Lines rows={[[0, 14, 7], [3, 11, 11], [0, 14, 15]]} /></ToolButton>
          <ToolButton $w={28} $off aria-label="自动换行"><WrapText>ab<br />c↵</WrapText></ToolButton>
        </GroupRow>
        <GroupRow>
          <ToolButton $w={22} $off aria-label="左对齐"><Lines rows={[[0, 14, 2], [0, 9, 6], [0, 14, 10], [0, 9, 14]]} /></ToolButton>
          <ToolButton $w={22} $off aria-label="居中"><Lines rows={[[0, 14, 2], [3, 11, 6], [0, 14, 10], [3, 11, 14]]} /></ToolButton>
          <ToolButton $w={22} $off aria-label="右对齐"><Lines rows={[[0, 14, 2], [5, 14, 6], [0, 14, 10], [5, 14, 14]]} /></ToolButton>
          <ToolButton $w={24} $off aria-label="合并后居中"><MergeIcon /></ToolButton>
          <ToolButton $w={10} aria-label="合并选项"><Caret /></ToolButton>
        </GroupRow>
        <GroupRow>
          <ToolButton $w={22} $off aria-label="减少缩进量"><IndentIcon dir="out" /></ToolButton>
          <ToolButton $w={22} $off aria-label="增加缩进量"><IndentIcon dir="in" /></ToolButton>
          <Split $gap={3} />
          <ToolButton $w={22} $off aria-label="方向">
            <Icon w={16} h={16}>
              <text x="0" y="11" transform="rotate(-45 5 8)" fontSize="9" fill="currentColor" stroke="none">ab</text>
              <path d="M6 14.500l8.500-8M11 6.500h3.500V10" />
            </Icon>
          </ToolButton>
          <ToolButton $w={8} aria-label="方向选项"><Caret /></ToolButton>
        </GroupRow>
        <GroupLabel>对齐方式</GroupLabel>
        <Launcher $off aria-label="对齐选项"><LauncherIcon /></Launcher>
      </Group>

      <Group $w={91}>
        <GroupRow>
          <Combo $w={76} $h={22} $tone="ribbon">
            <select aria-label="数字格式"><option>常规</option></select><Caret />
          </Combo>
        </GroupRow>
        <GroupRow>
          <ToolButton $w={22} $off aria-label="会计数字格式"><CurrencyIcon /></ToolButton>
          <ToolButton $w={10} aria-label="会计数字格式选项"><Caret /></ToolButton>
          <ToolButton $w={24} $off aria-label="百分比样式"><Glyph $size={18}>%</Glyph></ToolButton>
          <ToolButton $w={20} $off aria-label="千位分隔样式">
            <Icon w={8} h={13}>
              <path d="M0 3.500C0 1 2 0 4 .2 6.500.5 8 2.500 7.800 5 7.500 8.500 5 11.500 1.500 12.500c1.500-1.500 2.500-3 2.700-5.200C2 7.500 0 6 0 3.500z" fill="currentColor" stroke="none" />
            </Icon>
          </ToolButton>
        </GroupRow>
        <GroupRow>
          <ToolButton $w={22} aria-label="增加小数位数"><Decimal /></ToolButton>
          <ToolButton $w={22} aria-label="减少小数位数"><Decimal more /></ToolButton>
        </GroupRow>
        <GroupLabel>数字</GroupLabel>
        <Launcher $off aria-label="数字选项"><LauncherIcon /></Launcher>
      </Group>

      <Group $w={123}>
        <GroupRow $pad={11}><ListButton $off><CellsIcon kind="cond" />条件格式<Caret /></ListButton></GroupRow>
        <GroupRow $pad={11}><ListButton $off><CellsIcon kind="table" />套用表格格式<Caret /></ListButton></GroupRow>
        <GroupRow $pad={11}><ListButton $off><CellsIcon kind="style" />单元格样式<Caret /></ListButton></GroupRow>
        <GroupLabel $full>样式</GroupLabel>
      </Group>

      <Group $w={79}>
        <GroupRow $pad={10}>
          <ListButton $off><CellsIcon kind="insert" />插入</ListButton>
          <ToolButton $w={22} aria-label="插入选项"><Caret color={ink} /></ToolButton>
        </GroupRow>
        <GroupRow $pad={10}>
          <ListButton $off><CellsIcon kind="delete" />删除</ListButton>
          <ToolButton $w={22} aria-label="删除选项"><Caret color={ink} /></ToolButton>
        </GroupRow>
        <GroupRow $pad={10}><ListButton><CellsIcon kind="format" />格式<Caret color={ink} /></ListButton></GroupRow>
        <GroupLabel $full>单元格</GroupLabel>
      </Group>

      <Group $w={53}>
        <BigButton $w={53}>
          <BoxedIcon><Magnifier fill="#fff" /></BoxedIcon>
          编辑
          <CaretLine><Caret color={ink} /></CaretLine>
        </BigButton>
      </Group>

      <Group $w={52}>
        <BigButton $w={52}>
          <BoxedIcon>
            <Icon w={18} h={18}>
              <circle cx="9" cy="9" r="7" stroke="#6b8fd0" />
              <circle cx="9" cy="9" r="5.300" fill="#5ba3dc" stroke="#3d6fc0" />
            </Icon>
          </BoxedIcon>
          test
          <CaretLine><Caret color={ink} /></CaretLine>
        </BigButton>
      </Group>
      <Collapse aria-label="折叠功能区">
        <Icon w={9} h={7}><path d="M1 5.500L4.500 2 8 5.500" strokeWidth="2" /></Icon>
      </Collapse>
    </RibbonBody>
  </>
);

const Formula = () => (
  <FormulaBar>
    <Combo $w={191} $h={27} $tone="name">
      <select aria-label="名称框"><option>图表 7</option></select>
      <Arrow d="M0 0h7L3.500 4z" w={7} h={4} />
    </Combo>
    <Dots $m={14} />
    <FormulaButtons>
      <button aria-label="取消"><Icon w={11} h={11}><path d="M1 1l9 9M10 1l-9 9" strokeWidth="1.700" /></Icon></button>
      <button aria-label="输入"><Icon w={13} h={11}><path d="M1 6l3.500 3.500L12 1" strokeWidth="2.200" /></Icon></button>
      <FxButton aria-label="插入函数">f<small>x</small></FxButton>
    </FormulaButtons>
    <FormulaField>
      <input aria-label="编辑栏" />
      <ChevDown />
    </FormulaField>
  </FormulaBar>
);

const Sheet = () => (
  <SheetColumn>
    <SheetBody>
      <Canvas>
        <Grid>
          <colgroup>
            <col style={{ width: 22 }} />
            <col style={{ width: 76 }} />
            <col style={{ width: 33 }} />
            {columns.slice(1).map((c) => <col key={c} />)}
            <col style={{ width: 5 }} />
          </colgroup>
          <thead>
            <tr>
              <th aria-label="全选">
                <Corner width="11" height="11" viewBox="0 0 11 11"><path d="M11 0v11H0z" fill="#f0f0f0" /></Corner>
              </th>
              <th>C</th>
              {columns.map((c) => <th key={c}>{c}</th>)}
              <th />
            </tr>
          </thead>
          <tbody>
            <tr>
              <th>1</th>
              <HeadCell>
                <HeadInner><span>区域划分</span><Arrow d="M0 0h7L3.500 4z" w={7} h={4} /></HeadInner>
              </HeadCell>
              <Blank colSpan={10} rowSpan={23} />
            </tr>
            {regions.map((r, i) => (
              <tr key={i}>
                <th>{i + 2}</th>
                <Region>{r}</Region>
              </tr>
            ))}
          </tbody>
        </Grid>
        <ChartFrame><MapChart /></ChartFrame>
      </Canvas>
      <ScrollTrack>
        <ScrollButton aria-label="向上滚动"><Arrow d="M0 5h7L3.500 1z" h={6} /></ScrollButton>
        <ScrollThumb />
        <ScrollButton aria-label="向下滚动"><Arrow d="M0 1h7L3.500 5z" h={6} /></ScrollButton>
      </ScrollTrack>
    </SheetBody>
    <SheetBar>
      <SheetNav>
        <NavButton $off aria-label="上一个工作表"><Arrow d="M4 0v8L0 4z" w={4} /></NavButton>
        <NavButton aria-label="下一个工作表"><Arrow d="M0 0v8l4-4z" w={4} /></NavButton>
      </SheetNav>
      <SheetTab $w={88}>Sheet2 (2)</SheetTab>
      <SheetTab $w={67}>Sheet1</SheetTab>
      <SheetTab $w={35} $active>She</SheetTab>
      <SheetTools>
        <span>...</span>
        <NewSheet aria-label="新工作表">
          <Icon w={17} h={17}>
            <circle cx="8.500" cy="8.500" r="7.500" strokeWidth="1.500" />
            <path d="M8.500 4.500v8M4.500 8.500h8" strokeWidth="2" />
          </Icon>
        </NewSheet>
        <Dots $m={0} />
      </SheetTools>
      <HScroll>
        <ScrollButton aria-label="向左滚动"><Arrow d="M5 0v8L1 4z" w={6} /></ScrollButton>
        <HThumb />
        <ScrollButton aria-label="向右滚动"><Arrow d="M1 0v8l4-4z" w={6} /></ScrollButton>
      </HScroll>
    </SheetBar>
  </SheetColumn>
);

const FormatPane = () => (
  <Pane>
    <PaneHead>
      <PaneTitle>设置数据系...</PaneTitle>
      <PaneButton $w={28} aria-label="任务窗格选项"><Arrow d="M0 1h9L4.500 6z" w={9} h={7} /></PaneButton>
      <PaneButton $w={50} aria-label="关闭窗格">
        <Icon w={10} h={10}><path d="M1 1l8 8M9 1L1 9" strokeWidth="2" /></Icon>
      </PaneButton>
    </PaneHead>
    <Chooser>
      系列选项
      <svg width="14" height="10" viewBox="0 0 14 10"><path d="M1 .8h12L7 9z" fill="#0f6cbd" stroke="#6fb3e8" /></svg>
    </Chooser>
    <PaneTabs>
      <button aria-label="填充与线条">
        <Icon w={24} h={24}>
          <path d="M1.500 13L11 4l8 8-9.500 9.500z" strokeWidth="1.300" />
          <path d="M7 8V2.500c0-1.500 3.500-1.500 3.500 0V10" strokeWidth="1.200" />
          <circle cx="10.500" cy="10" r="1" fill="currentColor" />
          <path d="M15 7c4 0 8 3 7.500 7-.3 2-1.500 3-2.500 4 .8-5-.5-8-5-11z" fill="currentColor" stroke="none" />
        </Icon>
      </button>
      <button aria-label="效果">
        <Icon w={22} h={24}>
          <path d="M11 2l9.500 7.500L17 19H5L1.500 9.500z" strokeWidth="1.200" />
          <path d="M5 19.500h12" strokeWidth="2" />
          <path d="M4.500 21v2M17.500 21v2" stroke="#999" />
        </Icon>
      </button>
      <button aria-label="系列选项">
        <Icon w={22} h={24}>
          <path d="M1.500 8.500h5v13h-5zM8.500 2.500h5v19h-5zM15.500 5.500h5v16h-5z" fill="#0b6a34" strokeWidth="1.200" />
        </Icon>
      </button>
    </PaneTabs>
    <svg width="190" height="9" viewBox="0 0 190 9" fill="none" stroke="#b4b4b4" strokeWidth="1.200">
      <path d="M0 8.400h88l6-7 6 7h90" />
    </svg>
    <Section>
      <SectionTitle><Arrow d="M7 1v6H1z" w={8} h={8} />系列选项</SectionTitle>
      {fields.map((f) => (
        <Field key={f.label}>
          {f.label}
          <Combo $w={150} $h={23} $tone="pane">
            <select><option>{f.value}</option></select>
            <Arrow d="M0 0h7L3.500 4z" w={7} h={4} />
          </Combo>
        </Field>
      ))}
    </Section>
    <Marker width="176" height="60" viewBox="0 0 176 60" fill="none" aria-hidden="true">
      <path d="M2 2h172v56H2z" stroke="#e6004f" strokeWidth="3" strokeDasharray="12 6" strokeDashoffset="8" />
    </Marker>
  </Pane>
);

const Status = () => (
  <StatusBar>
    <Ready>就绪</Ready>
    <button aria-label="录制宏">
      <Icon w={14} h={13}>
        <path d="M3 3.500h10.500v9H3zM3 6.500h10.500M3 9.500h10.500M6.500 4v8.500M10 4v8.500" stroke="#f2f0ef" />
        <circle cx="3.500" cy="3.500" r="3" fill="#f2f0ef" stroke="none" />
      </Icon>
    </button>
    <ViewButtons>
      <ViewButton $on aria-label="普通">
        <Icon w={13} h={13}><path d="M.5.5h12v12H.5zM.5 4.500h12M.5 8.500h12M4.500.5v12M8.500.5v12" stroke="#fff" /></Icon>
      </ViewButton>
      <ViewButton aria-label="页面布局">
        <Icon w={13} h={13}><path d="M.5.5h12v12H.5zM3.500 2.500h6v8h-6zM5 4.500h3M5 6.500h3M5 8.500h3" stroke="#f2f0ef" /></Icon>
      </ViewButton>
      <ViewButton aria-label="分页预览">
        <Icon w={14} h={13}>
          <path d="M.5.5h13v12H.5z" stroke="#e4e1df" />
          <path d="M1 1h3v6H1zM6 1h3v6H6z" fill="#fff" stroke="#fff" />
        </Icon>
      </ViewButton>
    </ViewButtons>
    <ZoomButton aria-label="缩小">−</ZoomButton>
    <ZoomRange type="range" aria-label="显示比例" min={0} max={100} defaultValue={34} />
    <ZoomButton aria-label="放大">+</ZoomButton>
    <ZoomValue>70%</ZoomValue>
  </StatusBar>
);

export default function App() {
  return (
    <>
      <GlobalStyle />
      <Page>
        <Margin>
          <LeftMark>
            <svg width="15" height="28" viewBox="0 0 15 28" fill="#c4c4c4" overflow="visible">
              <circle cx="7" cy="23" r="3.500" />
              <circle cx="5" cy="14" r="3" />
              <circle cx="9" cy="6.500" r="2.500" />
              <circle cx="17" cy="3" r="1.800" />
              <circle cx="25" cy="6" r="1.200" />
              <circle cx="30" cy="11" r=".8" />
            </svg>
            再议未来
          </LeftMark>
        </Margin>
        <Window>
          <Start />
          <Ribbon />
          <Formula />
          <Workspace>
            <Sheet />
            <FormatPane />
          </Workspace>
          <Status />
        </Window>
        <Margin $pad={6}>
          <RightMark><MarkDisc>值</MarkDisc>什么值得买</RightMark>
        </Margin>
      </Page>
    </>
  );
}
